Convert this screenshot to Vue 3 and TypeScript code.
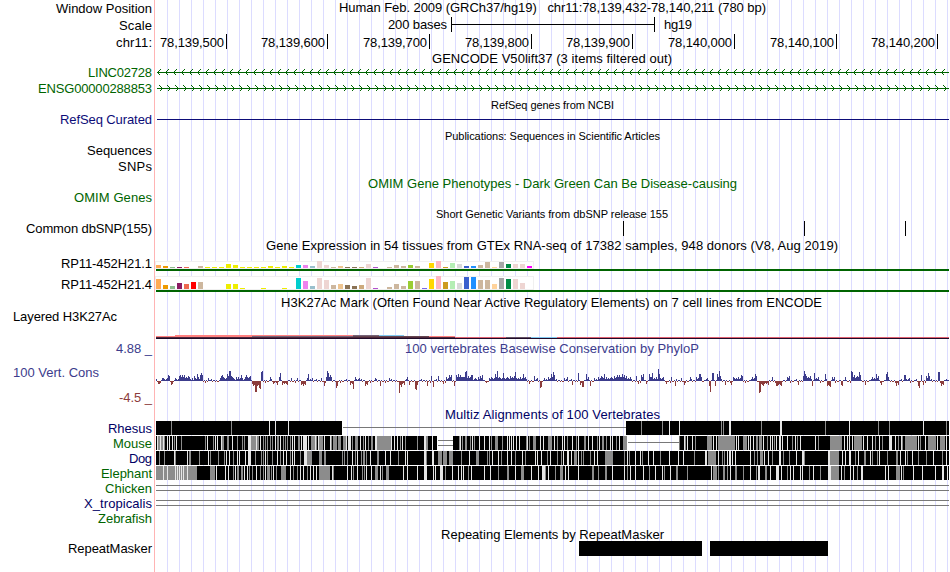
<script setup lang="ts">
interface Row {
  kind: string;
  top: number;
  height: number;
  label?: string;
  // left and right edge of the label
  lx?: [number, number];
  ly?: number;
  color?: string;
  title?: string;
  tx?: [number, number];
  ty?: number;
  small?: boolean;
  data?: string;
}

const green = "#006400";
const navy = "#0c0c78";
const darkNavy = "#000064";
const phylo = "#3c3c8c";

const mouse =
  "157w 158g2 160w 161g2 163w 164g 167w 169w 172w 174g 176w 181g 205g 207w 213g 215w 217w 221w 222g2 227g2 232w 237g 242g 244g 248w3 251g5 256w 257g 258g 260w 263g 265g 267g 270g 272g 275w 277g2 280w 283g 285g 287g 290g 292w 294w 298g2 301w 303w4 308w 311g4 315w 316g 318w 319g4 324w 330w 331g 333g4 338g3 343g4 346w 348w3 352g 355g3 360w 363g 365w 368g 371g2 375w2 377g14 391w 394w 397w 400g 402w 405g 417g 424w2 426g2 432w 459g 460w 462g 465g2 470g 472w 474g 479w 484w 489w 491g 495g3 502g 507w 509w 511w 513w 516w 519w 526g 527w 529g 533g3 540w 543w 548g4 554w 557g 562w 564w 567g 572w 576g 578w 584g2 588w 592w 597g 599w 602g2 606g 610w 612w 616g 619w 623g4 684w 685g 687w 692w 695g 707g5 713w 716w 718g17 736w 738w 743g4 748w 750w 753w 756g2 759g3 763w 767g 770w 772w 774g 776w 779w2 782w 787w 792g 795w 797g 800w 815w 818g 830g12 844w 847w 849w 852w 854g8 863w 867w 872w 875g 879w 882g 889w3 895w 898g 901w 902g 905g12 918w 920g 925w 928g8 937w 940g5 946w";
const dog =
  "159g 164g 174w 175g 187w 189g2 199g 208w 210g 218g 224g 226w 229w 233g 237w 239w 245w 248w3 255g 261g 263g 265w 267g 272g 277w 280g 283w 286w 290g 292w 294w 300g 304w3 307g2 309g3 319g3 324g2 342g 344g 347g 352w 355g 357w 361g 363g2 366g 370w 377g2 385w 390w 398g 405w 407w 424w2 426g 432w2 438g4 443g4 449g4 461g 469w 476g3 487g 489g 492w 498w 501g 507w 511w 515g 522w 525g 535w 537w 541w 547g 550w 557g 561g 563w 567w2 571w 574g3 578w 581g 583g 590g 594w 597w 605g8 624g 627w 629g 635w 640w 642g 648w 653w 660g 669w 678w 683w 694g 705w2 708g8 718w 722g 724g 727w 729w2 732w 735w 750w 754g 757g 760g3 764w 768w 772g 779w2 783g 789g 796w 802w2 804g 828w2 830g9 842w 845w 849w2 855g 858w 864g2 870w 872g 877g 879w 887g 896g2 900w 905w 907g 912w 918g 926g 933w 942g 946w";
const elephant =
  "156g41 163w 167w 175w 177w 179w 181w 183w 187w 210g5 216w 225w 228w 233g 235w 237g2 241g2 244w 247w 249g 252g 256w 260g 263g 265w 267g3 271g 273w 276g 281g5 290w 293g 297g 300w 303w 307g 310w 313w 316w 319g11 332w 333g 347w 351w 353g 357w 362g 364g 366w 371w 375g3 380w 382g 386g3 403w 407w 417w 424w3 433w 435w 440w3 445g 452w 458w 461w 463w 468g 471w 484w 490w 498g 507g2 515w 521g3 531w 538w 542w3 545g 548w 555g 560g3 565w 568w 578w 592g2 598g 605g2 612w 624w 627g 630w 635w 643w 649g 655w 662w 664g 670w 676g2 687g 711w 713g4 718g 723g2 727g 730w 735g2 743g 750w 756g 758w2 765g2 770w 776w3 781w 787g 790w 793w 800w 802w 809g 813w 820g 828w3 831g8 841w 844g 850w 853w 857g 861w2 885w 888w 896g4 901w 903g 913w 922w 935w 942w2 947w";
const rhesus =
  "171g 231g 269w 275w 288w 641g 662g 669w 679w 721g 723g 729w2 761g 780w2 825g 849w 878g 889g 923w 946g";

const rows: Row[] = [
  { kind: "text", top: 0, height: 16, label: "Window Position", lx: [56, 152], ly: 13, title: "Human Feb. 2009 (GRCh37/hg19)\u00a0\u00a0 chr11:78,139,432-78,140,211 (780 bp)", tx: [339, 766], ty: 12 },
  { kind: "scale", top: 16, height: 16, label: "Scale", lx: [119, 152], ly: 30 },
  { kind: "ruler", top: 32, height: 18, label: "chr11:", lx: [116, 152], ly: 47 },
  { kind: "text", top: 50, height: 14, title: "GENCODE V50lift37 (3 items filtered out)", tx: [432, 672], ty: 63 },
  { kind: "reverse", top: 64, height: 16, label: "LINC02728", lx: [88, 152], ly: 77, color: green },
  { kind: "forward", top: 80, height: 16, label: "ENSG00000288853", lx: [38, 152], ly: 93, color: green },
  { kind: "text", top: 96, height: 16, title: "RefSeq genes from NCBI", tx: [491, 614], ty: 109, small: true },
  { kind: "refseq", top: 112, height: 15, label: "RefSeq Curated", lx: [60, 152], ly: 124, color: navy },
  { kind: "text", top: 127, height: 16, title: "Publications: Sequences in Scientific Articles", tx: [445, 660], ty: 140, small: true },
  { kind: "text", top: 143, height: 16, label: "Sequences", lx: [87, 152], ly: 155 },
  { kind: "text", top: 159, height: 16, label: "SNPs", lx: [118, 152], ly: 171 },
  { kind: "text", top: 175, height: 16, color: green, title: "OMIM Gene Phenotypes - Dark Green Can Be Disease-causing", tx: [368, 737], ty: 188 },
  { kind: "text", top: 191, height: 14, label: "OMIM Genes", lx: [74, 152], ly: 202, color: green },
  { kind: "text", top: 205, height: 15, title: "Short Genetic Variants from dbSNP release 155", tx: [436, 668], ty: 218, small: true },
  { kind: "snp", top: 220, height: 17, label: "Common dbSNP(155)", lx: [26, 152], ly: 233 },
  { kind: "text", top: 237, height: 17, title: "Gene Expression in 54 tissues from GTEx RNA-seq of 17382 samples, 948 donors (V8, Aug 2019)", tx: [266, 838], ty: 250 },
  { kind: "gtex", top: 254, height: 20, label: "RP11-452H21.1", lx: [61, 152], ly: 268, data: "3 2 1 1 1 0 2 1 1 1 4 3 1 1 1 1 2 1 2 1 3 3 2 7 3 1 2 1 1 1 4 1 0 1 3 2 3 2 0 5 7 1 5 4 2 2 3 6 1 6 4 4 4 2" },
  { kind: "gtex", top: 274, height: 21, label: "RP11-452H21.4", lx: [61, 152], ly: 289, data: "10 4 3 6 5 7 7 0 0 0 5 5 1 0 0 1 0 0 1 0 11 8 3 11 9 4 5 4 3 4 11 1 0 2 5 3 8 8 1 10 13 7 8 6 12 12 9 9 5 11 10 10 6 0" },
  { kind: "text", top: 295, height: 15, title: "H3K27Ac Mark (Often Found Near Active Regulatory Elements) on 7 cell lines from ENCODE", tx: [281, 822], ty: 307 },
  { kind: "h3k", top: 310, height: 31, label: "Layered H3K27Ac", lx: [13, 117], ly: 321 },
  { kind: "text", top: 341, height: 16, label: "4.88 _", lx: [116, 152], ly: 353, color: phylo, title: "100 vertebrates Basewise Conservation by PhyloP", tx: [405, 699], ty: 353 },
  { kind: "phylo", top: 357, height: 51, label: "100 Vert. Cons", lx: [13, 99], ly: 377, color: phylo },
  { kind: "text", top: 408, height: 13, color: darkNavy, title: "Multiz Alignments of 100 Vertebrates", tx: [445, 660], ty: 419 },
  { kind: "align", top: 421, height: 15, label: "Rhesus", lx: [108, 152], ly: 433, color: darkNavy, data: rhesus },
  { kind: "align", top: 436, height: 15, label: "Mouse", lx: [113, 152], ly: 448, color: green, data: mouse },
  { kind: "align", top: 451, height: 15, label: "Dog", lx: [129, 152], ly: 463, color: darkNavy, data: dog },
  { kind: "align", top: 466, height: 15, label: "Elephant", lx: [101, 152], ly: 478, color: green, data: elephant },
  { kind: "double", top: 481, height: 15, label: "Chicken", lx: [105, 152], ly: 493, color: green },
  { kind: "double", top: 496, height: 15, label: "X_tropicalis", lx: [84, 152], ly: 508, color: darkNavy },
  { kind: "text", top: 511, height: 15, label: "Zebrafish", lx: [98, 152], ly: 523, color: green },
  { kind: "text", top: 526, height: 15, title: "Repeating Elements by RepeatMasker", tx: [441, 664], ty: 539 },
  { kind: "repeat", top: 541, height: 31, label: "RepeatMasker", lx: [68, 152], ly: 553 },
];

const ticks = [226, 327, 429, 531, 632, 734, 836, 937].map((x, i) => ({
  x,
  text: `78,${139500 + i * 100}`.replace(/(\d{3})(\d{3})$/, "$1,$2"),
}));

const tissueColors = [
  "#ffaa56", "#ee9a00", "#8fbc8f", "#8b1c62", "#ee6a50", "#ff0000", "#cdb79e",
  ...Array(13).fill("#eeee00"),
  "#00cdcd", "#ee82ee", "#9ac0cd", "#eed5d2", "#eed5d2", "#cdb79e", "#eec591",
  "#8b7355", "#8b7355", "#cdaa7d", "#eed5d2", "#b452cd", "#7a378b", "#cdb79e",
  "#cdb79e", "#cdb79e", "#9acd32", "#cdb79e", "#7a67ee", "#ffd700", "#ffb6c1",
  "#cd9b1d", "#b4eeb4", "#d9d9d9", "#3a5fcd", "#1e90ff", "#cdb79e", "#cdb79e",
  "#ffd39b", "#a6a6a6", "#008b45", "#eed5d2", "#eed5d2", "#ff00ff",
];

function expression(data = "") {
  return data.split(" ").map(Number);
}

// "171g2": x, shade (g = grey, w = light), optional width
function stripes(data = "") {
  return data.split(" ").map((s) => {
    const [, x, shade, w] = s.match(/^(\d+)([gw])(\d*)$/)!;
    return { x: +x, w: +(w || 1), fill: shade === "g" ? "#8c8c8c" : "#e6e6e6" };
  });
}

function blocks(label?: string) {
  if (label === "Rhesus") return [[156, 342], [626, 949]];
  if (label === "Mouse") return [[156, 437], [453, 627], [680, 949]];
  return [[156, 949]];
}

function chevrons(reverse: boolean) {
  let d = "";
  for (let x = reverse ? 157.5 : 162.5; x < 948; x += 8) {
    const y = reverse ? 72.5 : 88.5;
    const back = reverse ? x + 3 : x - 3;
    d += `M${back} ${y - 3}L${x} ${y}L${back} ${y + 3}`;
  }
  return d;
}

const peaks =
  "156:2 158:-3 159:-3 162:3 163:3 167:3 168:6 169:5 171:-4 172:-3 175:3 179:5 180:6 181:4 182:6 184:6 188:5 189:4 192:3 194:5 195:3 197:7 198:4 200:6 201:8 202:6 208:3 220:3 221:5 222:6 223:4 227:7 228:5 229:10 230:10 231:5 232:4 233:3 236:4 238:4 241:6 242:3 245:4 246:6 247:4 249:4 250:5 252:-3 253:-5 255:-11 256:-11 257:-5 259:-7 260:-8 261:9 262:10 270:4 273:-3 277:-4 279:4 280:8 282:-4 287:-4 291:3 297:3 301:-4 303:-5 305:-4 307:3 308:7 312:3 321:3 324:-5 326:4 327:10 328:8 330:6 331:4 336:-7 337:-5 350:-4 353:-8 355:4 359:3 365:-5 367:-4 375:3 380:-5 389:3 399:-12 401:-6 404:-4 407:4 409:-4 415:-8 416:-9 417:-4 427:-5 431:5 433:-6 438:5 443:-3 446:4 449:6 451:6 454:-5 456:6 458:7 460:6 465:9 466:10 468:5 471:6 472:6 475:3 478:4 480:5 482:6 486:-2 489:3 491:4 495:7 497:10 499:4 503:8 507:4 510:5 514:5 515:9 520:4 523:7 525:4 529:-3 534:5 537:3 540:-7 541:-6 544:3 548:4 551:7 553:9 554:6 564:3 567:4 572:-4 578:8 580:-4 582:-6 583:-6 586:7 588:4 590:-5 594:3 598:4 601:5 604:7 606:4 611:4 614:5 617:6 619:6 622:7 624:6 626:5 630:4 636:5 638:-3 641:6 643:7 646:-3 649:7 652:8 656:4 658:12 659:7 663:4 666:-3 671:4 675:-5 681:3 684:-4 690:4 696:4 699:7 700:7 701:4 707:3 709:-5 710:-11 712:8 713:8 715:-5 717:7 719:10 720:5 725:-4 731:-4 733:4 738:4 741:6 742:5 752:4 755:7 756:5 759:-12 760:-11 763:-5 768:-4 772:4 776:-5 777:-5 781:-5 787:4 789:5 798:-4 803:5 804:10 805:7 806:5 810:5 812:-5 814:8 818:4 825:7 827:-5 829:-5 830:-6 832:4 834:4 841:-4 842:-5 845:4 851:10 852:9 854:6 857:5 859:9 860:6 865:-4 872:4 876:7 878:5 881:-4 886:7 887:9 888:4 896:-5 898:-4 904:6 905:6 909:3 918:-5 919:-7 921:6 923:-4 926:5 928:8 929:5 938:9 939:9 941:-5 943:-4 946:2";

const points = peaks.split(" ").map((p) => p.split(":").map(Number));
const filler = [1, -1, 1, 1, -1, -1, 1, 2, 1, -1, -2, -1, 1, 1, -1];

// between two close peaks of the same sign the signal stays on that side
function score(x: number) {
  const next = points.findIndex(([px]) => px >= x);
  if (next < 0) return filler[x % filler.length];
  const [nx, nh] = points[next];
  if (nx === x) return nh;
  const [px, ph] = points[next - 1];
  if (ph * nh > 0 && nx - px <= 5) {
    const low = Math.min(Math.abs(ph), Math.abs(nh));
    return Math.sign(nh) * Math.max(1, Math.min(4, low - 1 - (x % 2)));
  }
  return filler[(x * 7) % filler.length];
}

const phyloBars = Array.from({ length: 793 }, (_, i) => ({
  x: 156 + i,
  h: score(156 + i),
}));
</script>

<template>
  <main class="browser">
    <svg
      v-for="row in rows"
      :key="row.top"
      class="row"
      width="950"
      :height="row.height"
      :viewBox="`0 ${row.top} 950 ${row.height}`"
    >
      <g v-if="row.kind === 'scale'">
        <text x="388" y="29" textLength="59">200 bases</text>
        <rect x="451" y="24" width="204" height="1" />
        <rect x="451" y="17" width="1" height="15" />
        <rect x="654" y="17" width="1" height="15" />
        <text x="664" y="29" textLength="28">hg19</text>
      </g>

      <g v-else-if="row.kind === 'ruler'">
        <template v-for="tick in ticks" :key="tick.x">
          <text :x="tick.x - 66" y="47" textLength="64">{{ tick.text }}</text>
          <rect :x="tick.x" y="34" width="1" height="15" />
        </template>
      </g>

      <g v-else-if="row.kind === 'reverse' || row.kind === 'forward'">
        <rect class="gene" x="157" :y="row.top + 8" width="792" height="1" />
        <path class="chevrons" :d="chevrons(row.kind === 'reverse')" />
      </g>

      <rect v-else-if="row.kind === 'refseq'" class="refseq" x="157" y="119" width="792" height="1" />

      <g v-else-if="row.kind === 'snp'">
        <rect v-for="x in [623, 804, 905]" :key="x" :x="x" y="221" width="1" height="15" />
      </g>

      <g v-else-if="row.kind === 'gtex'">
        <rect
          class="panel"
          x="155.5"
          :y="row.height === 20 ? 261.5 : 276.5"
          width="378"
          :height="row.height === 20 ? 7 : 13"
        />
        <rect
          v-for="(h, i) in expression(row.data)"
          :key="i"
          :x="156 + i * 7"
          :y="row.top + row.height - 6 - h"
          width="5"
          :height="h"
          :fill="tissueColors[i]"
        />
        <rect class="gene" x="156" :y="row.top + row.height - 5" width="793" height="2" />
      </g>

      <g v-else-if="row.kind === 'h3k'">
        <rect x="156" y="336" width="299" height="1" fill="#ff8080" />
        <rect x="175" y="335" width="204" height="1" fill="#ff8080" />
        <rect x="252" y="336" width="101" height="1" fill="#786478" />
        <rect x="353" y="335" width="26" height="1" fill="#786478" />
        <rect x="379" y="335" width="25" height="1" fill="#80c8f0" />
        <rect x="353" y="336" width="76" height="1" fill="#644650" />
        <rect x="156" y="337" width="299" height="1" fill="#50283c" />
        <rect x="455" y="337" width="494" height="1" fill="#e06070" />
        <rect x="506" y="337" width="25" height="1" fill="#645064" />
        <rect x="531" y="337" width="26" height="1" fill="#80c8f0" />
        <rect x="156" y="338" width="793" height="1" fill="#1e0a28" />
      </g>

      <g v-else-if="row.kind === 'phylo'">
        <rect
          v-for="bar in phyloBars"
          :key="bar.x"
          :x="bar.x"
          :y="bar.h > 0 ? 381 - bar.h : 381"
          width="1"
          :height="Math.abs(bar.h)"
          :class="bar.h > 0 ? 'conserved' : 'fast'"
        />
        <text class="fast" x="119" y="402" textLength="33">-4.5 _</text>
      </g>

      <g v-else-if="row.kind === 'align'">
        <rect
          v-for="[from, to] in blocks(row.label)"
          :key="from"
          :x="from"
          :y="row.top"
          :width="to - from"
          height="14"
        />
        <rect
          v-for="(s, i) in stripes(row.data)"
          :key="i"
          :x="s.x"
          :y="row.top"
          :width="s.w"
          height="14"
          :fill="s.fill"
        />
        <rect v-if="row.label === 'Rhesus'" class="line" x="343" y="427" width="283" height="1" />
        <g v-if="row.label === 'Mouse'" class="line">
          <rect x="438" y="440" width="15" height="1" />
          <rect x="438" y="445" width="15" height="1" />
          <rect x="628" y="442" width="51" height="1" />
          <rect x="679" y="436" width="1" height="14" />
        </g>
      </g>

      <g v-else-if="row.kind === 'double'" class="line">
        <rect x="156" :y="row.top + 4" width="793" height="1" />
        <rect x="156" :y="row.top + 9" width="793" height="1" />
      </g>

      <g v-else-if="row.kind === 'repeat'">
        <rect x="579" y="541" width="123" height="15" />
        <rect x="710" y="541" width="118" height="15" />
      </g>

      <text
        v-if="row.label && row.lx"
        :x="row.lx[0]"
        :y="row.ly"
        :textLength="row.lx[1] - row.lx[0]"
        :fill="row.color"
      >{{ row.label }}</text>
      <text
        v-if="row.title && row.tx"
        :class="{ small: row.small }"
        :x="row.tx[0]"
        :y="row.ty"
        :textLength="row.tx[1] - row.tx[0]"
        :fill="row.color"
      >{{ row.title }}</text>
    </svg>
  </main>
</template>

<style>
body {
  margin: 0;
  background: #fff;
}
</style>

<style scoped>
.browser {
  width: 950px;
  height: 572px;
  display: flex;
  flex-direction: column;
  /* red edge of the label column, then a guide line every 12px */
  background:
    linear-gradient(#ffb4b4, #ffb4b4) 154px 0 / 1px 100% no-repeat,
    repeating-linear-gradient(90deg, #dcdcff 0 1px, transparent 1px 12px) 167px 0 / 783px 100% no-repeat;
}

.row {
  display: block;
  flex: none;
  overflow: visible;
  shape-rendering: crispEdges;
  font-family: "Liberation Sans", Arial, sans-serif;
  font-size: 13px;
}

.small {
  font-size: 11px;
}

.gene {
  fill: #006400;
}

.chevrons {
  fill: none;
  stroke: #006400;
  stroke-width: 1;
}

.refseq {
  fill: #0c0c78;
}

.panel {
  fill: #fff;
  stroke: #f0f0f0;
}

.conserved {
  fill: #3c3c8c;
}

.fast {
  fill: #8c3c3c;
}

.line {
  fill: #787878;
}
</style>
